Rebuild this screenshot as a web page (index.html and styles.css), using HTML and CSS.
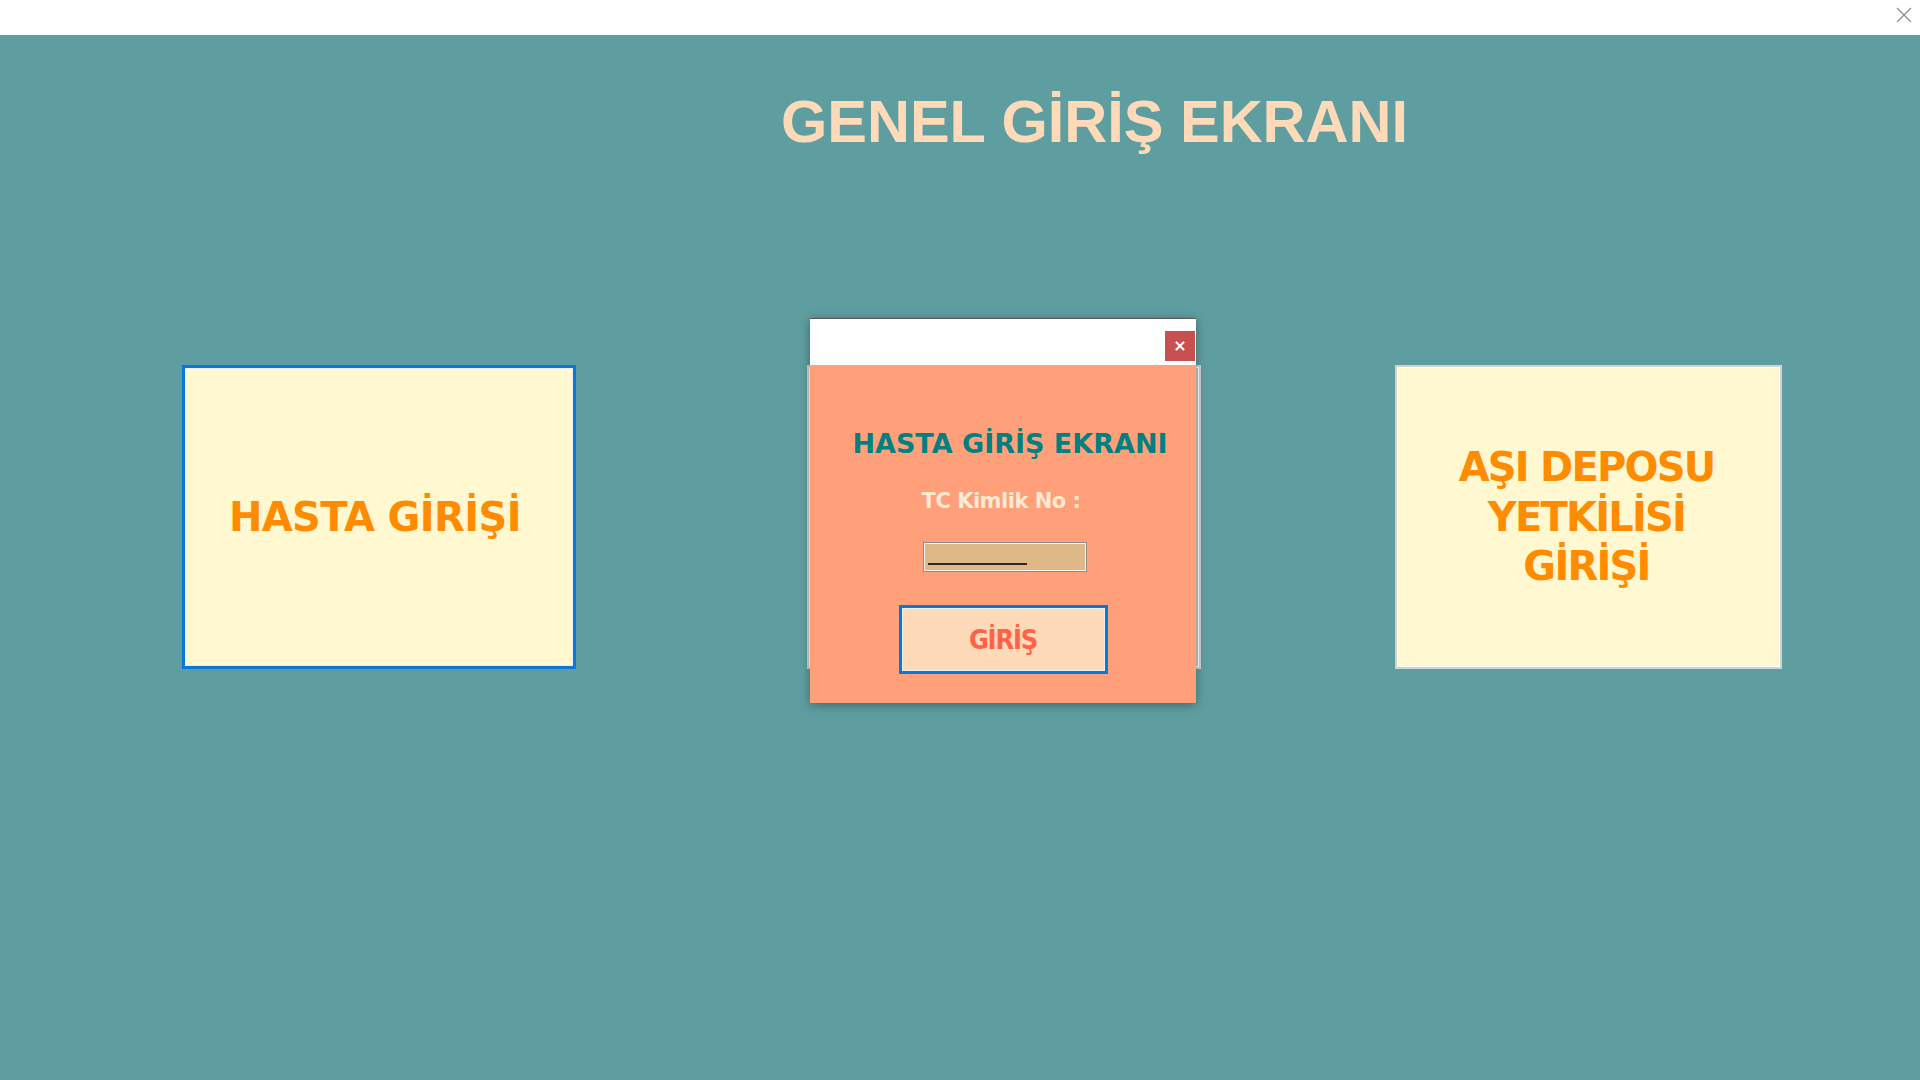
FILE: index.html
```html
<!DOCTYPE html>
<html lang="tr">
<head>
<meta charset="utf-8">
<title>Genel Giriş Ekranı</title>
<link rel="stylesheet" href="styles.css">
</head>
<body>
<div class="topbar">
  <svg class="win-close" width="16" height="16" viewBox="0 0 16 16"><path d="M1 1 L15 15 M15 1 L1 15" stroke="#8a8a8a" stroke-width="1.2" fill="none"/></svg>
</div>
<main class="stage">
  <h1 class="title">GENEL GİRİŞ EKRANI</h1>
  <div class="cards">
    <div class="card card-active"><span>HASTA GİRİŞİ</span></div>
    <div class="card card-plain card-mid"></div>
    <div class="card card-plain card-right"><span>AŞI DEPOSU<br>YETKİLİSİ<br>GİRİŞİ</span></div>
  </div>

  <div class="dialog">
    <div class="dialog-bar">
      <button class="dialog-close">×</button>
    </div>
    <div class="dialog-body">
      <div class="dialog-title">HASTA GİRİŞ EKRANI</div>
      <div class="dialog-label">TC Kimlik No :</div>
      <div class="field"><span class="mask"></span></div>
      <button class="login-btn">GİRİŞ</button>
    </div>
  </div>
</main>
</body>
</html>
```
FILE: styles.css
```css
html, body {
  margin: 0;
  padding: 0;
  width: 1920px;
  height: 1080px;
  overflow: hidden;
  background: #5f9ea0;
}

.topbar {
  height: 35px;
  background: #ffffff;
  display: flex;
  justify-content: flex-end;
  align-items: flex-start;
}

.win-close {
  margin: 7px 8px 0 0;
}

.stage {
  position: relative;
  height: 1045px;
  background: #5f9ea0;
  display: flex;
  flex-direction: column;
}

.title {
  margin: 57px 0 0 781px;
  font-family: "Liberation Sans", Arial, sans-serif;
  font-weight: bold;
  font-size: 59.5px;
  line-height: 1;
  color: #ffdab9;
  white-space: nowrap;
}

.cards {
  display: flex;
  margin-top: 213px;
  height: 304px;
}

.card {
  box-sizing: border-box;
  height: 304px;
  width: 394px;
  background: #fff8d0;
  display: flex;
  align-items: center;
  justify-content: center;
  text-align: center;
  font-family: "DejaVu Sans", Verdana, sans-serif;
  font-weight: bold;
  font-size: 40px;
  line-height: 49.5px;
  color: #ff8c00;
}

.card-active {
  margin-left: 182px;
  border: 3px solid #0a78d8;
  box-shadow: inset 0 0 0 1px #e6eef2;
}

.card-active span {
  letter-spacing: -0.6px;
  margin-left: -8px;
  margin-top: 2px;
}

.card-plain {
  border: 2px solid #d2d2d2;
  box-shadow: inset 0 0 0 1px #ffffff;
}

.card-mid {
  margin-left: 231px;
  background: #c8c8c8;
}

.card-right {
  margin-left: 194px;
  width: 387px;
}

.card-right span {
  letter-spacing: -1.8px;
  margin-left: -4px;
  margin-top: 2px;
}

.card span {
  display: block;
}

/* dialog */
.dialog {
  position: absolute;
  left: 810px;
  top: 283px;
  width: 386px;
  height: 385px;
  display: flex;
  flex-direction: column;
  box-shadow: 0 2px 10px rgba(0, 0, 0, 0.35);
}

.dialog-bar {
  height: 47px;
  box-sizing: border-box;
  background: #ffffff;
  border-top: 1px solid #5a5a5a;
  display: flex;
  justify-content: flex-end;
  align-items: flex-end;
  padding: 0 1px 4px 0;
}

.dialog-close {
  width: 30px;
  height: 30px;
  border: none;
  padding: 0;
  background: #c75050;
  color: #ffffff;
  font-family: "DejaVu Sans", sans-serif;
  font-weight: bold;
  font-size: 16px;
  line-height: 30px;
}

.dialog-body {
  flex: 1;
  background: #ffa07a;
  display: flex;
  flex-direction: column;
  align-items: center;
  padding-top: 65px;
}

.dialog-title {
  font-family: "DejaVu Sans", Verdana, sans-serif;
  font-weight: bold;
  font-size: 27px;
  line-height: 1;
  color: #008080;
  margin-left: 14px;
  letter-spacing: 0;
  white-space: nowrap;
}

.dialog-label {
  margin-top: 33px;
  font-family: "DejaVu Sans", Verdana, sans-serif;
  font-weight: bold;
  font-size: 21px;
  line-height: 22px;
  color: #ffe9d2;
  margin-left: -4px;
  letter-spacing: -0.5px;
}

.field {
  margin-top: 30px;
  margin-left: 3px;
  box-sizing: border-box;
  width: 164px;
  height: 30px;
  background: #deb887;
  border: 1px solid #8a8a8a;
  box-shadow: inset 0 0 0 1px #f4f4f4;
  display: flex;
  align-items: flex-end;
  padding: 0 0 6px 4px;
}

.mask {
  display: block;
  width: 99px;
  height: 2px;
  background: #2c2a26;
}

.login-btn {
  margin-top: 33px;
  box-sizing: border-box;
  width: 209px;
  height: 69px;
  background: #ffdab9;
  border: 3px solid #0a78d8;
  box-shadow: inset 0 0 0 1px #e8eef2;
  font-family: "DejaVu Sans Condensed", "DejaVu Sans", sans-serif;
  font-weight: bold;
  font-size: 27px;
  letter-spacing: -1.2px;
  color: #ff6347;
  padding: 0;
}
```
